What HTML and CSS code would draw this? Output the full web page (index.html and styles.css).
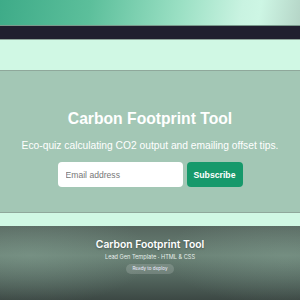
FILE: index.html
```html
<!DOCTYPE html>
<html lang="en">
<head>
<meta charset="utf-8">
<title>Carbon Footprint Tool</title>
<link rel="stylesheet" href="styles.css">
</head>
<body>
<header class="top"></header>
<nav class="nav"></nav>
<div class="band"></div>
<section class="hero">
  <h1 class="hero-title">Carbon Footprint Tool</h1>
  <p class="hero-sub">Eco-quiz calculating CO2 output and emailing offset tips.</p>
  <form class="form">
    <input class="email" type="email" placeholder="Email address">
    <button class="btn" type="button">Subscribe</button>
  </form>
</section>
<div class="band band-sm"></div>
<footer class="show">
  <h2 class="show-title">Carbon Footprint Tool</h2>
  <p class="show-sub">Lead Gen Template · HTML &amp; CSS</p>
  <span class="pill">Ready to deploy</span>
</footer>
</body>
</html>
```
FILE: styles.css
```css
* { box-sizing: border-box; }
html, body { margin: 0; padding: 0; }
body {
  width: 300px;
  height: 300px;
  overflow: hidden;
  font-family: "Liberation Sans", Arial, sans-serif;
  display: flex;
  flex-direction: column;
}
.top {
  height: 26px;
  flex: none;
  background: linear-gradient(100deg, #3eab88 0%, #5cbf9b 30%, #9be0c4 60%, #c9f3e1 80%, #cdf6e4 86%, #b5d5c7 100%);
  border-bottom: 1px solid #7a9a8c;
}
.nav {
  height: 14px;
  flex: none;
  background: #201f2f;
  border-bottom: 1px solid #8da59a;
}
.band {
  height: 31px;
  flex: none;
  background: #d0f8e4;
  border-bottom: 1px solid #8fa89b;
}
.band-sm { height: 13px; border-bottom: none; }
.hero {
  height: 142px;
  flex: none;
  background: #a3c7b5;
  border-bottom: 1px solid #8fa89b;
  display: flex;
  flex-direction: column;
  align-items: center;
  padding-top: 38px;
  color: #fff;
}
.hero-title {
  margin: 0;
  font-size: 15.7px;
  font-weight: bold;
  line-height: 20px;
}
.hero-sub {
  margin: 10px 0 0;
  font-size: 10.25px;
  line-height: 13px;
}
.form {
  display: flex;
  gap: 4px;
  margin-top: 10px;
}
.email {
  width: 125px;
  height: 25px;
  border: none;
  border-radius: 4px;
  background: #fff;
  padding: 0 8px;
  font-family: inherit;
  font-size: 8.6px;
  color: #333;
}
.email::placeholder { color: #777; }
.btn {
  width: 56px;
  height: 25px;
  border: none;
  border-radius: 4px;
  background: #16996b;
  color: #fff;
  font-family: inherit;
  font-weight: bold;
  font-size: 8.7px;
  padding: 0;
}
.show {
  flex: 1;
  display: flex;
  flex-direction: column;
  align-items: center;
  padding-top: 12px;
  background:
    radial-gradient(ellipse 120px 50px at 10% 40%, rgba(140,170,155,0.35), transparent),
    radial-gradient(ellipse 120px 50px at 95% 40%, rgba(140,170,155,0.3), transparent),
    linear-gradient(180deg, #56665f 0%, #6a8276 40%, #53665e 70%, #3c4844 100%);
  color: #fff;
  font-family: Inter, "Liberation Sans", sans-serif;
}
.show-title {
  margin: 0;
  font-size: 10.3px;
  font-weight: 600;
  line-height: 12px;
  text-shadow: 0 1px 2px rgba(0,0,0,0.3);
}
.show-sub {
  margin: 4px 0 0;
  font-size: 5.6px;
  line-height: 7px;
  color: #e6eeea;
}
.pill {
  margin-top: 3px;
  padding: 2px 6px;
  border-radius: 5px;
  background: rgba(255,255,255,0.16);
  font-size: 4.6px;
  line-height: 6px;
  color: #eef;
}
```
